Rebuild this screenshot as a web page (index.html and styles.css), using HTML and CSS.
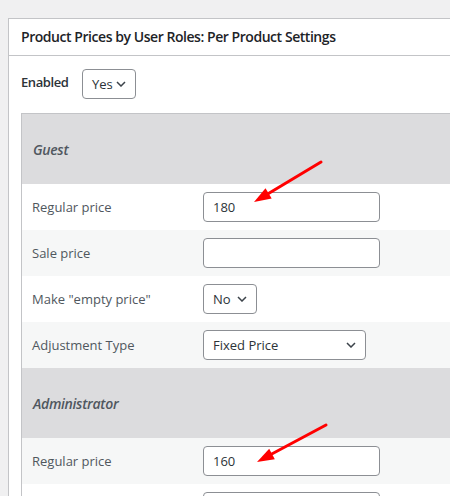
FILE: index.html
```html
<!DOCTYPE html>
<html>
<head>
<meta charset="utf-8">
<link rel="stylesheet" href="styles.css">
</head>
<body>
<div class="card">
  <div class="card-header"><h2 class="title">Product Prices by User Roles: Per Product Settings</h2></div>
  <div class="card-body">
    <div class="enabled-row">
      <span class="enabled-label">Enabled</span>
      <div class="select select-yes"><span>Yes</span><svg class="chev" width="10" height="6" viewBox="0 0 10 6"><path d="M1 1 L5 5 L9 1" fill="none" stroke="#3c434a" stroke-width="1.5"/></svg></div>
    </div>
    <table class="roles">
      <tr class="role-head"><th colspan="2">Guest</th></tr>
      <tr class="row-white"><td class="lbl">Regular price</td><td class="fld"><div class="input">180</div></td></tr>
      <tr class="row-gray"><td class="lbl">Sale price</td><td class="fld"><div class="input"></div></td></tr>
      <tr class="row-white"><td class="lbl">Make "empty price"</td><td class="fld"><div class="select select-no"><span>No</span><svg class="chev" width="10" height="6" viewBox="0 0 10 6"><path d="M1 1 L5 5 L9 1" fill="none" stroke="#3c434a" stroke-width="1.5"/></svg></div></td></tr>
      <tr class="row-gray"><td class="lbl">Adjustment Type</td><td class="fld"><div class="select select-wide"><span>Fixed Price</span><svg class="chev" width="10" height="6" viewBox="0 0 10 6"><path d="M1 1 L5 5 L9 1" fill="none" stroke="#3c434a" stroke-width="1.5"/></svg></div></td></tr>
      <tr class="role-head"><th colspan="2">Administrator</th></tr>
      <tr class="row-gray"><td class="lbl">Regular price</td><td class="fld"><div class="input">160</div></td></tr>
      <tr class="row-white"><td class="lbl"></td><td class="fld"><div class="input"></div></td></tr>
    </table>
  </div>
</div>
<svg class="arrows" width="450" height="496" viewBox="0 0 450 496">
  <line x1="321" y1="162" x2="266" y2="195" stroke="#ff0000" stroke-width="3" stroke-linecap="round"/>
  <polygon points="254,202 271.7,198.5 265.5,188.2" fill="#ff0000"/>
  <line x1="326" y1="425" x2="268" y2="456" stroke="#ff0000" stroke-width="3" stroke-linecap="round"/>
  <polygon points="257,462 274.8,459.3 269.2,448.7" fill="#ff0000"/>
</svg>
</body>
</html>
```
FILE: styles.css
```css
html, body {
  margin: 0;
  padding: 0;
  background: #f0f0f1;
  overflow: hidden;
  height: 496px;
}
body {
  position: relative;
  padding: 18px 0 0 8px;
  font-family: "Open Sans", "Noto Sans", sans-serif;
  font-size: 13px;
  color: #3c434a;
}
.card {
  width: 620px;
  background: #fff;
  border: 1px solid #c3c4c7;
}
.card-header {
  height: 34px;
  border-bottom: 1px solid #c3c4c7;
  padding: 0 12px 2px 12px;
  display: flex;
  align-items: center;
}
.title {
  margin: 0;
  font-size: 14px;
  font-weight: 600;
  color: #1d2327;
  letter-spacing: -0.45px;
}
.card-body {
  padding: 13px 12px 12px 12px;
}
.enabled-row {
  display: flex;
  align-items: center;
  margin-bottom: 14px;
}
.enabled-label {
  width: 61px;
  font-weight: 600;
  color: #2c3338;
  font-size: 13px;
  letter-spacing: -0.4px;
  position: relative;
  top: -2px;
}
.select {
  box-sizing: border-box;
  height: 30px;
  border: 1px solid #8c8f94;
  border-radius: 4px;
  background: #fff;
  display: flex;
  align-items: center;
  justify-content: space-between;
  padding: 0 9px 0 9px;
  font-size: 13px;
  color: #2c3338;
}
.select-yes { width: 54px; }
.select-no { width: 54px; }
.select-wide { width: 163px; }
.chev { flex: none; }
.roles {
  border-collapse: collapse;
  border: 1px solid #c3c4c7;
  width: 560px;
}
.role-head th {
  background: #dcdcde;
  height: 70px;
  padding: 0 11px;
  text-align: left;
  font-style: italic;
  font-weight: 600;
  font-size: 14px;
  color: #50575e;
  vertical-align: middle;
  letter-spacing: -0.3px;
}
.row-white td { background: #fff; }
.row-gray td { background: #f6f7f7; }
.lbl {
  width: 160px;
  height: 46px;
  padding: 0 10px 0 10px;
  vertical-align: middle;
  color: #50575e;
  font-size: 13px;
}
.fld {
  padding: 0 0 0 1px;
  vertical-align: middle;
}
.input {
  box-sizing: border-box;
  width: 177px;
  height: 30px;
  border: 1px solid #8c8f94;
  border-radius: 4px;
  background: #fff;
  padding: 0 9px;
  display: flex;
  align-items: center;
  font-size: 13px;
  color: #2c3338;
}
.arrows {
  position: absolute;
  left: 0;
  top: 0;
  pointer-events: none;
}
```
